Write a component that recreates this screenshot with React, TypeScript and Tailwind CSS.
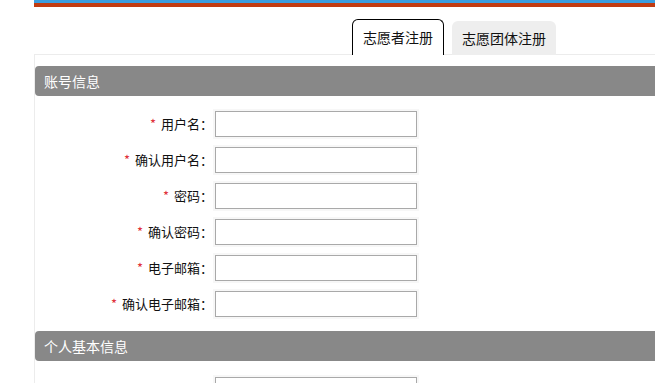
import React from "react";

const accountFields = ["用户名", "确认用户名", "密码", "确认密码", "电子邮箱", "确认电子邮箱"];

function SectionHeader({ title }: { title: string }) {
  return (
    <div className="h-[30px] bg-[#888888] rounded-l-[4px] flex items-center pl-[9px] text-white text-[14px]">
      {title}
    </div>
  );
}

function FieldRow({ label }: { label: string }) {
  return (
    <div className="flex items-center h-[26px]">
      <label className="w-[180px] text-right text-[13px] text-[#111] pr-[2px] whitespace-nowrap">
        <span className="text-[#e0303a] mr-[5px]">*</span>
        {label}：
      </label>
      <input
        type="text"
        className="w-[202px] h-[26px] border border-[#a9a9a9] bg-white outline-none shadow-[0_0_0_2px_#f7f7f7]"
      />
    </div>
  );
}

export default function App() {
  return (
    <div
      className="w-[655px] h-[383px] overflow-hidden bg-white"
      style={{ fontFamily: '"Noto Sans CJK SC", "Liberation Sans", sans-serif' }}
    >
      <div className="ml-[34px]">
        <div className="h-[3px] bg-[#3a9ee0]" />
        <div className="h-[4px] bg-[#c13c12]" />

        <div className="flex items-end gap-[8px] pl-[318px] mt-[12px] relative z-10 -mb-px">
          <div className="w-[92px] h-[36px] border border-black border-b-0 rounded-t-[6px] bg-white flex items-center justify-center text-[14px] text-[#111]">
            志愿者注册
          </div>
          <div className="w-[104px] h-[34px] rounded-t-[6px] bg-[#eeeeee] flex items-center justify-center text-[14px] text-[#111]">
            志愿团体注册
          </div>
        </div>

        <div className="border-l border-t border-[#ececec] pt-[11px]">
          <SectionHeader title="账号信息" />
          <div className="flex flex-col gap-[10px] pt-[15px] pb-[14px]">
            {accountFields.map((f) => (
              <FieldRow key={f} label={f} />
            ))}
          </div>
          <SectionHeader title="个人基本信息" />
          <div className="flex flex-col pt-[16px]">
            <div className="flex items-center h-[26px]">
              <div className="w-[180px]" />
              <input
                type="text"
                className="w-[202px] h-[26px] border border-[#a9a9a9] bg-white outline-none shadow-[0_0_0_2px_#f7f7f7]"
              />
            </div>
          </div>
        </div>
      </div>
    </div>
  );
}
